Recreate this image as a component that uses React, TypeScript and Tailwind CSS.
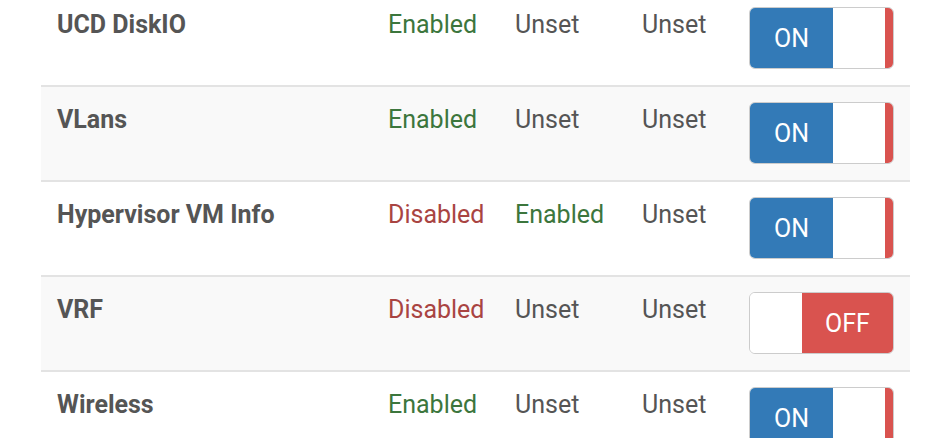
import React from 'react';

type Status = 'Enabled' | 'Disabled' | 'Unset';

const rows: { name: string; a: Status; b: Status; c: Status; on: boolean }[] = [
  { name: 'UCD DiskIO', a: 'Enabled', b: 'Unset', c: 'Unset', on: true },
  { name: 'VLans', a: 'Enabled', b: 'Unset', c: 'Unset', on: true },
  { name: 'Hypervisor VM Info', a: 'Disabled', b: 'Enabled', c: 'Unset', on: true },
  { name: 'VRF', a: 'Disabled', b: 'Unset', c: 'Unset', on: false },
  { name: 'Wireless', a: 'Enabled', b: 'Unset', c: 'Unset', on: true },
];

const statusClass = (s: Status) =>
  s === 'Enabled' ? 'text-[#3c763d]' : s === 'Disabled' ? 'text-[#a94442]' : 'text-[#555555]';

const Switch: React.FC<{ on: boolean }> = ({ on }) => (
  <div className="flex h-[62px] w-[145px] overflow-hidden rounded-[6px] border border-[#cccccc] bg-white text-[25px] leading-none text-white">
    {on ? (
      <>
        <span className="flex w-[83px] items-center justify-center bg-[#337ab7]">ON</span>
        <span className="w-[52px] bg-white" />
        <span className="flex-1 bg-[#d9534f]" />
      </>
    ) : (
      <>
        <span className="w-[52px] bg-white" />
        <span className="flex flex-1 items-center justify-center bg-[#d9534f]">OFF</span>
      </>
    )}
  </div>
);

export default function App() {
  return (
    <div className="h-[438px] w-[934px] overflow-hidden bg-white font-['Roboto',sans-serif]">
      <div className="mt-[-10px] ml-[41px] w-[869px]">
        {rows.map((r, i) => (
          <div
            key={r.name}
            className={`grid h-[95px] grid-cols-[331px_127px_127px_107px_177px] border-t-2 border-[#e3e3e3] text-[25px] leading-[34px] ${
              i % 2 === 1 ? 'bg-[#f9f9f9]' : 'bg-white'
            }`}
          >
            <div className="px-4 pt-[16px] font-bold text-[#555555]">{r.name}</div>
            <div className={`px-4 pt-[16px] ${statusClass(r.a)}`}>{r.a}</div>
            <div className={`px-4 pt-[16px] ${statusClass(r.b)}`}>{r.b}</div>
            <div className={`px-4 pt-[16px] ${statusClass(r.c)}`}>{r.c}</div>
            <div className="px-4 pt-[15px]">
              <Switch on={r.on} />
            </div>
          </div>
        ))}
      </div>
    </div>
  );
}
